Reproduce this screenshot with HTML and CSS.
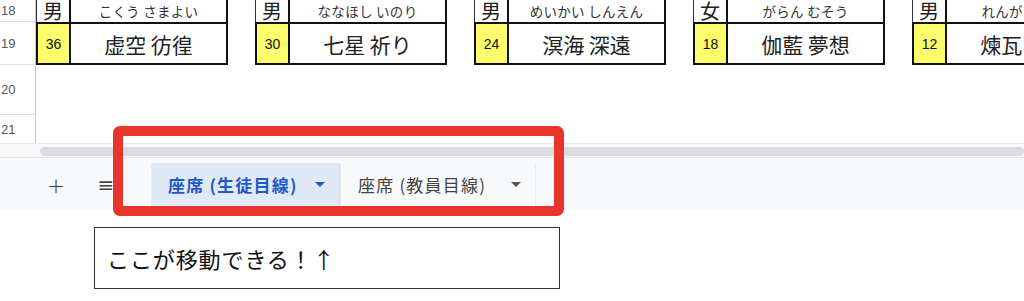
FILE: index.html
```html
<!DOCTYPE html>
<html lang="ja">
<head>
  <meta charset="UTF-8">
  <title>座席表</title>
  <link rel="stylesheet" href="styles.css">
</head>
<body>
  <div class="sheet">
    <div class="rowhead">
      <div class="rn r18">18</div>
      <div class="rn r19">19</div>
      <div class="rn r20">20</div>
      <div class="rn r21">21</div>
    </div>
    <div class="cells">
      <div class="card">
        <div class="card-top"><div class="sex">男</div><div class="kana">こくう さまよい</div></div>
        <div class="card-bottom"><div class="num">36</div><div class="name">虚空 彷徨</div></div>
      </div>
      <div class="card">
        <div class="card-top"><div class="sex">男</div><div class="kana">ななほし いのり</div></div>
        <div class="card-bottom"><div class="num">30</div><div class="name">七星 祈り</div></div>
      </div>
      <div class="card">
        <div class="card-top"><div class="sex">男</div><div class="kana">めいかい しんえん</div></div>
        <div class="card-bottom"><div class="num">24</div><div class="name">溟海 深遠</div></div>
      </div>
      <div class="card">
        <div class="card-top"><div class="sex">女</div><div class="kana">がらん むそう</div></div>
        <div class="card-bottom"><div class="num">18</div><div class="name">伽藍 夢想</div></div>
      </div>
      <div class="card">
        <div class="card-top"><div class="sex">男</div><div class="kana">れんが ひびき</div></div>
        <div class="card-bottom"><div class="num">12</div><div class="name">煉瓦 響き</div></div>
      </div>
    </div>
  </div>

  <div class="scrollrow">
    <div class="thumb"></div>
  </div>

  <div class="tabbar">
    <div class="tool plus">+</div>
    <div class="tool menu">≡</div>
    <div class="tab active">座席 (生徒目線)<span class="caret"></span></div>
    <div class="tab">座席 (教員目線)<span class="caret"></span></div>
  </div>

  <!-- annotation frame over the tabs -->
  <div class="highlight"></div>

  <div class="note">ここが移動できる！↑</div>
</body>
</html>
```

FILE: styles.css
```css
body {
  margin: 0;
  width: 1024px;
  height: 301px;
  overflow: hidden;
  background: #fff;
  font-family: "Noto Sans CJK JP", "Liberation Sans", sans-serif;
  color: #222;
  position: relative;
}
.sheet {
  display: flex;
  height: 143px;
}
.rowhead {
  width: 36px;
  flex-shrink: 0;
  border-right: 1px solid #c8c8c8;
  box-sizing: border-box;
  font-family: "Liberation Sans", sans-serif;
  font-size: 13px;
  color: #555;
}
.rn {
  display: flex;
  align-items: center;
  padding-left: 1px;
  border-bottom: 1px solid #e2e2e2;
  box-sizing: border-box;
}
.r18 { height: 22px; }
.r19 { height: 43px; }
.r20 { height: 50px; }
.r21 { height: 28px; border-bottom: none; }
.cells {
  flex: 1;
  display: flex;
  gap: 27px;
  overflow: hidden;
  align-items: flex-start;
}
.card {
  width: 192px;
  flex-shrink: 0;
}
.card-top {
  display: flex;
  height: 22px;
  border-left: 1px solid #333;
  border-right: 2px solid #111;
  box-sizing: border-box;
}
.sex {
  width: 32px;
  border-right: 2px solid #111;
  text-align: center;
  font-size: 20px;
  line-height: 21px;
  color: #222;
}
.kana {
  flex: 1;
  text-align: center;
  font-size: 13.5px;
  letter-spacing: 0.3px;
  line-height: 22px;
  color: #333;
  white-space: nowrap;
}
.card-bottom {
  display: flex;
  height: 43px;
  border: 2px solid #111;
  box-sizing: border-box;
}
.num {
  width: 31px;
  background: #fcfc6c;
  border-right: 2px solid #111;
  display: flex;
  align-items: center;
  justify-content: center;
  font-family: "Liberation Sans", sans-serif;
  font-size: 14px;
  color: #111;
}
.name {
  flex: 1;
  display: flex;
  align-items: center;
  justify-content: center;
  font-size: 21px;
  color: #222;
  white-space: nowrap;
}
.scrollrow {
  height: 15px;
  background: #f8f9fa;
  border-top: 1px solid #ebebeb;
  border-bottom: 1px solid #e6e6e6;
  box-sizing: border-box;
  padding: 3px 0 2px 40px;
}
.thumb {
  height: 9px;
  background: #dadce0;
  border-radius: 5px;
}
.tabbar {
  height: 52px;
  background: #f8f9fa;
  display: flex;
  align-items: flex-start;
  padding-top: 5px;
  box-sizing: border-box;
}
.tool {
  height: 44px;
  display: flex;
  align-items: center;
  justify-content: center;
  font-family: "DejaVu Sans", sans-serif;
  color: #444;
}
.plus {
  width: 24px;
  margin-left: 44px;
  font-size: 22px;
  font-weight: 300;
}
.menu {
  width: 24px;
  margin-left: 26px;
  margin-right: 34px;
  font-size: 20px;
}
.tab {
  width: 188px;
  height: 43px;
  display: flex;
  align-items: center;
  padding-left: 16px;
  box-sizing: border-box;
  font-size: 17px;
  letter-spacing: 1.2px;
  color: #444;
  box-shadow: 0 1px 1px rgba(0, 0, 0, 0.35);
  white-space: pre;
}
.tab + .tab {
  width: 195px;
  padding-left: 18px;
}
.tab.active {
  background: #e1e9f7;
  color: #1f5bc6;
  font-weight: bold;
}
.caret {
  width: 0;
  height: 0;
  border-left: 5px solid transparent;
  border-right: 5px solid transparent;
  border-top: 5px solid currentColor;
  margin-left: auto;
  margin-right: 15px;
}
.tab:not(.active) .caret {
  border-top-color: #555;
  margin-right: 14px;
}
.highlight {
  position: absolute;
  left: 113px;
  top: 126px;
  width: 451px;
  height: 90px;
  box-sizing: border-box;
  border: 10px solid #e8352b;
  border-radius: 7px;
}
.note {
  margin: 17px 0 0 94px;
  width: 466px;
  height: 62px;
  box-sizing: border-box;
  border: 1.5px solid #333;
  padding-left: 12px;
  display: flex;
  align-items: center;
  font-size: 22px;
  letter-spacing: 0.9px;
  color: #111;
}
```
